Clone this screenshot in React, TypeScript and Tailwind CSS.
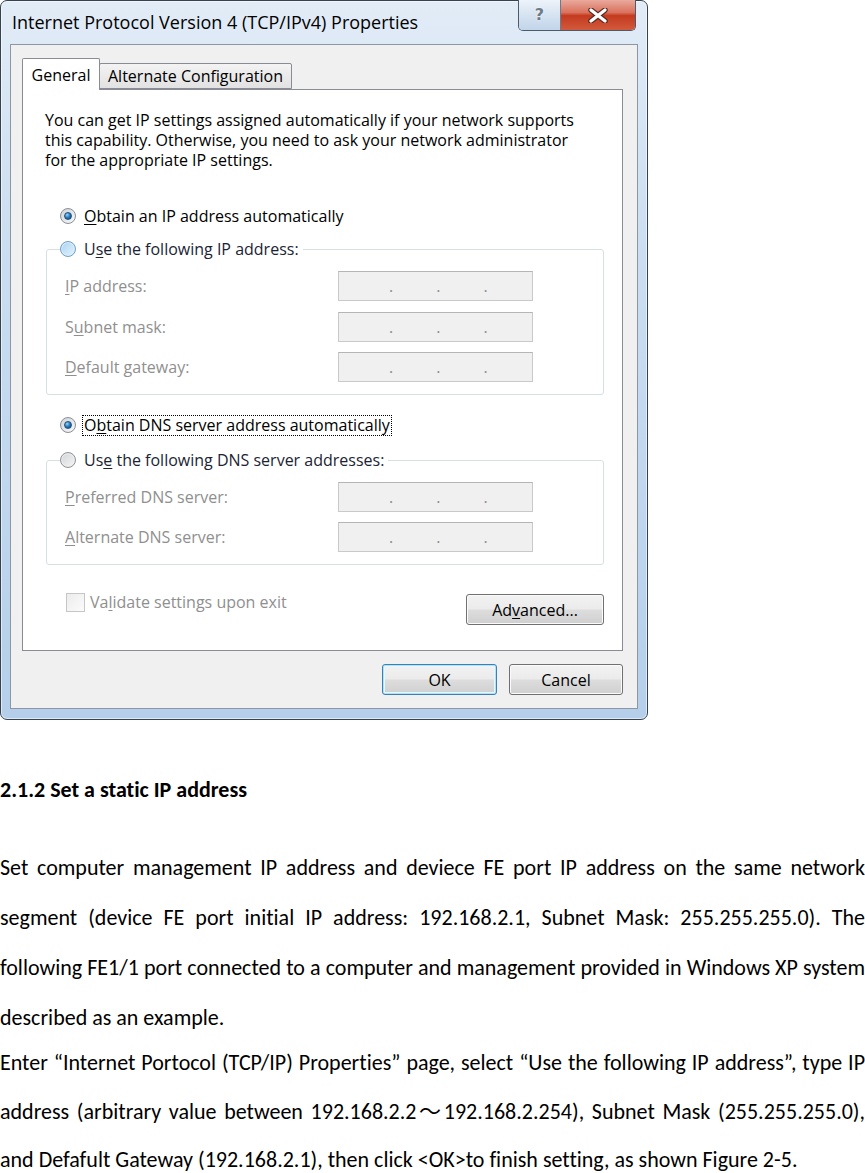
import React from "react";

type RadioState = "on" | "hover" | "off";

function Radio({ state }: { state: RadioState }) {
  if (state === "on") {
    return (
      <span className="w-[16px] h-[16px] shrink-0 rounded-full border border-[#8a8f96] bg-[linear-gradient(135deg,#cfd3d8,#f8f9fa)] flex items-center justify-center">
        <span className="w-[8px] h-[8px] rounded-full border border-[#1d4f7c] bg-[radial-gradient(circle_at_35%_30%,#9ad6f6_0%,#2c80c2_45%,#0b3c69_100%)]" />
      </span>
    );
  }
  if (state === "hover") {
    return (
      <span className="w-[16px] h-[16px] shrink-0 rounded-full border border-[#6c9fcb] bg-[linear-gradient(135deg,#a9d2f1,#e6f4fd)] shadow-[inset_0_0_0_1px_#d9eefc]" />
    );
  }
  return (
    <span className="w-[16px] h-[16px] shrink-0 rounded-full border border-[#8e9196] bg-[linear-gradient(135deg,#d2d4d6,#f6f6f6)] shadow-[inset_0_0_0_1px_#eeeeee]" />
  );
}

function IpBox() {
  return (
    <div className="w-[195px] h-[30px] border border-[#c9c9c9] border-t-[#b5b5b5] bg-[#f0f0f0] flex items-end pb-[6px] pl-[50px] gap-[43px] text-[#8c8c8c] leading-none">
      <span>.</span>
      <span>.</span>
      <span>.</span>
    </div>
  );
}

function Field({ label }: { label: React.ReactNode }) {
  return (
    <div className="flex items-center pl-[5px]">
      <span className="w-[273px] text-[#8f8f8f]">{label}</span>
      <IpBox />
    </div>
  );
}

function Win7Button({ children, primary, className }: { children: React.ReactNode; primary?: boolean; className?: string }) {
  return (
    <div
      className={
        "h-[31px] rounded-[3px] border flex items-center justify-center text-black bg-[linear-gradient(#f2f2f2_0%,#ebebeb_48%,#dddddd_52%,#cfcfcf_100%)] " +
        (primary
          ? "border-[#3c7fb1] shadow-[inset_0_0_0_1px_#aee4fb,inset_0_0_0_2px_#e8f6fd] "
          : "border-[#707070] shadow-[inset_0_0_0_1px_#fbfbfb] ") +
        (className ?? "")
      }
    >
      {children}
    </div>
  );
}

function Dialog() {
  return (
    <div className="w-[648px] h-[720px] rounded-[7px] border border-[#36424f] bg-[linear-gradient(180deg,#e2ecf7_0%,#cddff1_30%,#bfd6ee_70%,#b5cfea_100%)] shadow-[inset_0_0_0_1px_rgba(255,255,255,0.55)] px-[9px] pb-[10px] flex flex-col font-['Open_Sans',sans-serif] text-[16px] text-black">
      {/* title bar */}
      <div className="h-[43px] flex items-start justify-between">
        <span className="pl-[2px] pt-[9px] text-[18px] leading-[24px] text-black">
          Internet Protocol Version 4 (TCP/IPv4) Properties
        </span>
        <div className="-mt-px mr-[2px] flex h-[31px] rounded-b-[5px] border border-t-0 border-[#4d5a68] overflow-hidden">
          <div className="w-[42px] flex items-center justify-center bg-[linear-gradient(180deg,#edf3fa_0%,#d6e3f1_50%,#c2d5ea_100%)] border-r border-[#6c7b8b]">
            <span className="font-['DejaVu_Sans',sans-serif] font-bold text-[16px] leading-none text-[#6f7b88] [text-shadow:0_0_2px_#ffffff]">?</span>
          </div>
          <div className="w-[74px] flex items-center justify-center bg-[linear-gradient(180deg,#eaa99c_0%,#d9725d_42%,#c43a1f_52%,#d25a3c_100%)]">
            <svg width="22" height="15" viewBox="0 0 22 15">
              <path d="M4 2 L18 13 M18 2 L4 13" stroke="#5a2a22" strokeWidth="5.5" strokeLinecap="round" />
              <path d="M4 2 L18 13 M18 2 L4 13" stroke="#ffffff" strokeWidth="3.2" strokeLinecap="round" />
            </svg>
          </div>
        </div>
      </div>

      {/* client area */}
      <div className="flex-1 bg-[#f0f0f0] border border-[#8c97a3] flex flex-col pt-[13px] pl-[11px] pr-[14px]">
        {/* tabs */}
        <div className="flex items-end h-[31px]">
          <div className="relative z-10 -mb-px h-[32px] w-[78px] bg-white border border-b-0 border-[#898c95] rounded-t-[2px] flex items-center justify-center">
            General
          </div>
          <div className="h-[26px] w-[193px] -ml-px border border-[#898c95] rounded-t-[2px] bg-[linear-gradient(180deg,#f3f3f3,#e2e2e2)] flex items-center justify-center">
            Alternate Configuration
          </div>
        </div>

        {/* panel */}
        <div className="h-[562px] bg-white border border-[#898c95] flex flex-col">
          <p className="pl-[22px] pt-[20px] leading-[20px]">
            You can get IP settings assigned automatically if your network supports
            <br />
            this capability. Otherwise, you need to ask your network administrator
            <br />
            for the appropriate IP settings.
          </p>

          <div className="mt-[36px] ml-[37px] h-[20px] flex items-center gap-[8px]">
            <Radio state="on" />
            <span>
              <u className="underline-offset-2">O</u>btain an IP address automatically
            </span>
          </div>

          <fieldset className="mt-[13px] ml-[23px] mr-[18px] border border-[#d5dfe5] rounded-[3px] pl-[13px] pb-[12px] shadow-[inset_0_0_0_1px_#ffffff]">
            <legend className="pr-[4px] h-[20px] flex items-center gap-[8px] text-[#1b2434]">
              <Radio state="hover" />
              <span>
                U<u className="underline-offset-2">s</u>e the following IP address:
              </span>
            </legend>
            <div className="mt-[12px] flex flex-col gap-[10.5px]">
              <Field label={<><u className="underline-offset-2">I</u>P address:</>} />
              <Field label={<>S<u className="underline-offset-2">u</u>bnet mask:</>} />
              <Field label={<><u className="underline-offset-2">D</u>efault gateway:</>} />
            </div>
          </fieldset>

          <div className="mt-[19px] ml-[37px] h-[22px] flex items-center gap-[6px]">
            <Radio state="on" />
            <span className="border border-dotted border-black px-[1px] leading-[19px]">
              O<u className="underline-offset-2">b</u>tain DNS server address automatically
            </span>
          </div>

          <fieldset className="mt-[14px] ml-[23px] mr-[18px] border border-[#d5dfe5] rounded-[3px] pl-[13px] pb-[12px] shadow-[inset_0_0_0_1px_#ffffff]">
            <legend className="pr-[4px] h-[20px] flex items-center gap-[8px] text-[#1b2434]">
              <Radio state="off" />
              <span>
                Us<u className="underline-offset-2">e</u> the following DNS server addresses:
              </span>
            </legend>
            <div className="mt-[12px] flex flex-col gap-[10px]">
              <Field label={<><u className="underline-offset-2">P</u>referred DNS server:</>} />
              <Field label={<><u className="underline-offset-2">A</u>lternate DNS server:</>} />
            </div>
          </fieldset>

          <div className="mt-[27px] ml-[43px] mr-[18px] flex items-start justify-between">
            <div className="flex items-center gap-[5px] h-[20px] text-[#8f8f8f]">
              <span className="w-[19px] h-[19px] border border-[#c6c6c6] bg-[linear-gradient(135deg,#ececec,#fbfbfb)]" />
              <span>
                Va<u className="underline-offset-2">l</u>idate settings upon exit
              </span>
            </div>
            <Win7Button className="mt-[2px] w-[138px]">
              Ad<u className="underline-offset-2">v</u>anced...
            </Win7Button>
          </div>
        </div>

        {/* dialog buttons */}
        <div className="mt-[13px] flex justify-end gap-[12px]">
          <Win7Button primary className="w-[115px]">OK</Win7Button>
          <Win7Button className="w-[114px]">Cancel</Win7Button>
        </div>
      </div>
    </div>
  );
}

const just = "text-justify [text-align-last:justify] whitespace-nowrap";

export default function App() {
  return (
    <div className="w-[865px] min-h-[1173px] bg-white">
      <Dialog />

      <div className="font-['Calibri','Carlito','Lato','Noto_Sans_CJK_SC',sans-serif] text-[22px] text-black [font-variant-ligatures:none]">
        <h2 className="mt-[44px] h-[50px] flex items-center font-bold">2.1.2 Set a static IP address</h2>

        <div className="mt-[29px] leading-[50px]">
          <p className={just}>Set computer management IP address and deviece FE port IP address on the same network</p>
          <p className={just}>segment (device FE port initial IP address: 192.168.2.1, Subnet Mask: 255.255.255.0). The</p>
          <p className={just}>following FE1/1 port connected to a computer and management provided in Windows XP system</p>
          <p>described as an example.</p>
        </div>

        <div className="-mt-[4px] leading-[48.5px]">
          <p className={just}>Enter “Internet Portocol (TCP/IP) Properties” page, select “Use the following IP address”, type IP</p>
          <p className={just}>address (arbitrary value between 192.168.2.2～192.168.2.254), Subnet Mask (255.255.255.0),</p>
          <p>and Defafult Gateway (192.168.2.1), then click &lt;OK&gt;to finish setting, as shown Figure 2-5.</p>
        </div>
      </div>
    </div>
  );
}
